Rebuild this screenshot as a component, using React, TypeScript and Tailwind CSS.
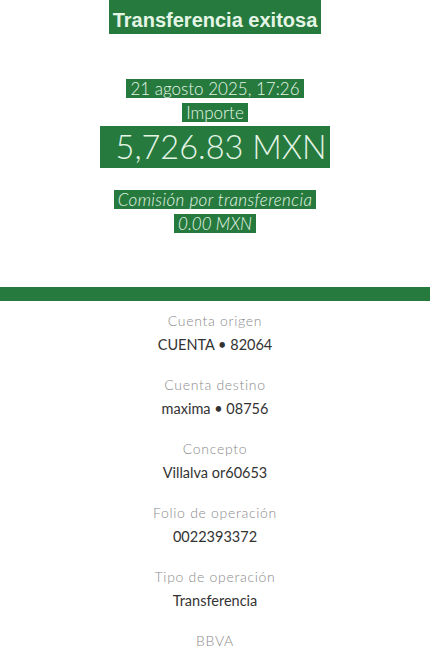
const rows = [
  { label: "Cuenta origen", value: "CUENTA • 82064" },
  { label: "Cuenta destino", value: "maxima • 08756" },
  { label: "Concepto", value: "Villalva or60653" },
  { label: "Folio de operación", value: "0022393372" },
  { label: "Tipo de operación", value: "Transferencia" },
];

const hl = "bg-[#277a3e] text-[#e4f5e6]";

export default function App() {
  return (
    <div className="w-[430px] h-[661px] bg-white overflow-hidden font-['Lato',sans-serif]">
      <div className="flex flex-col items-center">
        <h1 className={`${hl} px-1 pt-[10px] pb-[3px] text-[20px] leading-[21px] font-bold font-['Liberation_Sans',sans-serif]`}>
          Transferencia exitosa
        </h1>

        <div className="mt-[45px] flex flex-col items-center">
          <span className={`${hl} px-1 text-[17px] leading-[19px] font-light`}>21 agosto 2025, 17:26</span>
          <span className={`${hl} mt-[5px] px-1 text-[17px] leading-[19px] font-light`}>Importe</span>
          <span className={`${hl} mt-[4px] px-1 pl-4 text-[32.5px] leading-[42px] font-light`}>5,726.83 MXN</span>
          <span className={`${hl} mt-[22px] px-1 text-[17px] leading-[19px] font-light italic tracking-[0.4px]`}>
            Comisión por transferencia
          </span>
          <span className={`${hl} mt-[5px] px-1 text-[17px] leading-[19px] font-light italic`}>0.00 MXN</span>
        </div>
      </div>

      <div className="mt-[54px] h-[14px] bg-[#277a3e]" />

      <div className="flex flex-col items-center pt-[10px]">
        {rows.map((r) => (
          <div key={r.label} className="flex flex-col items-center h-[64px]">
            <span className="text-[14px] leading-[20px] font-light tracking-[0.7px] text-[#8a8a8a]">{r.label}</span>
            <span className="mt-[4px] text-[14.5px] leading-[20px] text-[#333]">{r.value}</span>
          </div>
        ))}
        <span className="text-[14px] leading-[20px] font-light tracking-[0.7px] text-[#8a8a8a]">BBVA</span>
      </div>
    </div>
  );
}
